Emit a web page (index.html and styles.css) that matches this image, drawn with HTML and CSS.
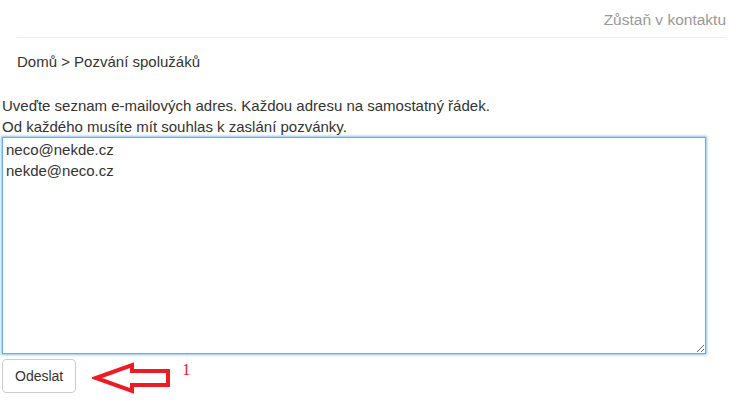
FILE: index.html
```html
<!DOCTYPE html>
<html>
<head>
	<meta charset="utf-8">
	<title>Pozvání spolužáků</title>
	<link rel="stylesheet" href="styles.css">
</head>
<body>
	<div class="header">
		<a class="header-link" href="#">Zůstaň v kontaktu</a>
	</div>

	<div class="breadcrumb">
		<a href="#">Domů</a> &gt; Pozvání spolužáků
	</div>

	<form class="invite">
		<p class="hint">Uveďte seznam e-mailových adres. Každou adresu na samostatný řádek.<br>Od každého musíte mít souhlas k zaslání pozvánky.</p>
		<textarea class="emails" spellcheck="true">neco@nekde.cz
nekde@neco.cz</textarea>
		<div class="actions">
			<button type="button" class="btn">Odeslat</button>
			<svg class="arrow" width="80" height="36" viewBox="0 0 80 36">
				<polygon points="4,18 40,5 40,11 76,11 76,25 40,25 40,31" fill="none" stroke="#ed1c24" stroke-width="4" stroke-linejoin="miter"/>
			</svg>
			<span class="mark">1</span>
		</div>
	</form>
</body>
</html>
```

FILE: styles.css
```css
body {
	margin: 0;
	padding: 0;
	background-color: #fff;
	font-family: "Liberation Sans", Arial, sans-serif;
	font-size: 15px;
	line-height: 21px;
	color: #333;
}
a {
	color: #333;
	text-decoration: none;
}
.header {
	margin: 0 11px 0 17px;
	padding: 9px 0 7px;
	border-bottom: 1px solid #eee;
	text-align: right;
}
.header-link {
	font-size: 15.5px;
	color: #999;
}
.breadcrumb {
	margin-top: 13px;
	padding-left: 17px;
}
.invite {
	margin-top: 23px;
	padding-left: 2px;
}
.hint {
	margin: 0;
}
.emails {
	display: block;
	box-sizing: border-box;
	width: 704px;
	height: 217px;
	margin: 0;
	padding: 1px 3px;
	border: 1px solid #66afe9;
	outline: none;
	box-shadow: 0 0 2px 1px rgba(102, 175, 233, 0.75);
	font-family: "Liberation Sans", Arial, sans-serif;
	font-size: 15px;
	line-height: 21px;
	color: #333;
	resize: both;
}
.actions {
	display: flex;
	align-items: flex-start;
	margin-top: 5px;
}
.btn {
	padding: 6px 12px;
	background-color: #fff;
	border: 1px solid #ccc;
	border-radius: 4px;
	font-family: "Liberation Sans", Arial, sans-serif;
	font-size: 14px;
	line-height: 20px;
	color: #333;
	cursor: pointer;
}
.arrow {
	margin-left: 16px;
	margin-top: 1px;
}
.mark {
	margin-left: 10px;
	margin-top: 3px;
	font-family: "Liberation Serif", "Times New Roman", serif;
	font-size: 16px;
	line-height: 16px;
	color: #ed1c24;
}
```
